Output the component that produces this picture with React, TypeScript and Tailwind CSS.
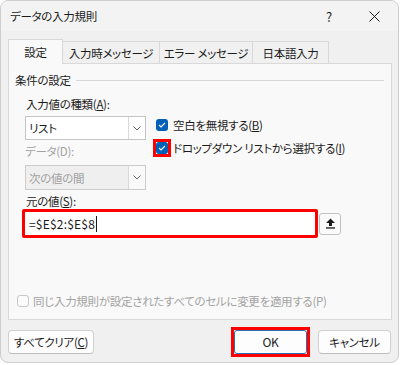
import React from "react";

function Check({ size = 12 }: { size?: number }) {
  return (
    <div
      className="rounded-[3px] bg-[#005fb8] flex items-center justify-center"
      style={{ width: size, height: size }}
    >
      <svg width="8" height="6" viewBox="0 0 8 6">
        <polyline points="1,3 3,5 7,1" fill="none" stroke="#ffffff" strokeWidth="1.1" />
      </svg>
    </div>
  );
}

function Chevron({ color = "#5c5c5c" }: { color?: string }) {
  return (
    <svg width="8" height="5" viewBox="0 0 8 5">
      <polyline points="0.5,0.5 4,4 7.5,0.5" fill="none" stroke={color} strokeWidth="1" />
    </svg>
  );
}

export default function App() {
  return (
    <div className="w-[400px] h-[365px] bg-white [font-family:'Noto_Sans_CJK_JP','Noto_Sans',sans-serif] [font-feature-settings:'palt'] text-[11.5px] tracking-[-0.3px] leading-[16px] text-[#1b1b1b]">
      <div className="w-[399px] h-[363px] rounded-[8px] border border-[#cdcdcd] bg-[#f0f0f0] overflow-hidden flex flex-col">
        {/* title bar */}
        <div className="h-[30px] bg-[#f3f3f3] flex items-center shrink-0">
          <span className="pl-[9px]">データの入力規則</span>
          <div className="ml-auto w-[46px] h-[30px] flex items-center justify-center text-[13px] pt-[1px]">?</div>
          <div className="w-[46px] h-[30px] flex items-center justify-center pr-[1px]">
            <svg width="11" height="11" viewBox="0 0 11 11">
              <path d="M0.5 0.5 L10.5 10.5 M10.5 0.5 L0.5 10.5" stroke="#1b1b1b" strokeWidth="1" />
            </svg>
          </div>
        </div>

        {/* tabs */}
        <div className="flex items-end h-[24px] mt-[8px] ml-[7px] relative z-10">
          <div className="w-[55px] h-[25px] bg-[#f9f9f9] border border-b-0 border-[#d9d9d9] flex items-center justify-center mb-[-1px]">
            設定
          </div>
          <div className="w-[98px] h-[22px] -ml-px border border-b-0 border-[#d9d9d9] flex items-center justify-center">
            入力時メッセージ
          </div>
          <div className="w-[94px] h-[22px] -ml-px border border-b-0 border-[#d9d9d9] flex items-center justify-center">
            エラー メッセージ
          </div>
          <div className="w-[77px] h-[22px] -ml-px border border-b-0 border-[#d9d9d9] flex items-center justify-center">
            日本語入力
          </div>
        </div>

        {/* panel */}
        <div className="ml-[7px] w-[384px] h-[257px] bg-[#f9f9f9] border border-[#d9d9d9] flex flex-col">
          <div className="flex items-center mt-[8px] pl-[6px] h-[16px]">
            <span>条件の設定</span>
            <div className="flex-1 h-px bg-[#d8d8d8] ml-[5px] mr-[7px]" />
          </div>
          <div className="mt-[8px] pl-[17px] h-[16px]">
            入力値の種類(<span className="underline">A</span>):
          </div>
          <div className="flex mt-[4px] pl-[16px]">
            <div className="w-[121px] flex flex-col">
              <div className="h-[24px] bg-white border border-[#c4c4c4] flex items-stretch">
                <span className="flex-1 pl-[3px] flex items-center">リスト</span>
                <div className="w-[17px] border-l border-[#d9d9d9] flex items-center justify-center">
                  <Chevron />
                </div>
              </div>
              <div className="mt-[3px] h-[16px] text-[#a3a3a3]">データ(D):</div>
              <div className="mt-[6px] h-[25px] bg-[#efefef] border border-[#cccccc] flex items-stretch">
                <span className="flex-1 pl-[3px] flex items-center text-[#9f9f9f]">次の値の間</span>
                <div className="w-[17px] bg-[#f9f9f9] border-l border-[#d9d9d9] flex items-center justify-center">
                  <Chevron color="#6a6a6a" />
                </div>
              </div>
            </div>
            <div className="ml-[7px] flex flex-col">
              <div className="flex items-center h-[18px]">
                <div className="w-[18px] h-[18px] flex items-center justify-center">
                  <Check />
                </div>
                <span className="ml-[2px]">
                  空白を無視する(<span className="underline">B</span>)
                </span>
              </div>
              <div className="flex items-center h-[18px] mt-[5px]">
                <div className="w-[18px] h-[18px] border-[3px] border-[#ff0000] flex items-center justify-center">
                  <Check />
                </div>
                <span className="ml-[2px]">
                  ドロップダウン リストから選択する(<span className="underline">I</span>)
                </span>
              </div>
            </div>
          </div>
          <div className="mt-[3px] pl-[17px] h-[16px]">
            元の値(<span className="underline">S</span>):
          </div>
          <div className="flex items-center mt-[0px] pl-[13px]">
            <div className="w-[296px] h-[29px] border-[3px] border-[#ff0000] rounded-[2px] bg-white flex items-center pl-[4px]">
              <span className="tracking-[0.2px] text-[12px]">=$E$2:$E$8</span>
              <div className="w-px h-[16px] bg-[#1b1b1b] ml-[1px]" />
            </div>
            <div className="ml-[1px] w-[22px] h-[22px] border border-[#c2c2c2] rounded-[3px] bg-[#fbfbfb] flex items-center justify-center">
              <svg width="11" height="11" viewBox="0 0 11 11">
                <path d="M5.5 0.5 L10 5 L7 5 L7 8 L4 8 L4 5 L1 5 Z" fill="#1b1b1b" />
                <rect x="1" y="9.3" width="9" height="1.3" fill="#1b1b1b" />
              </svg>
            </div>
          </div>
          <div className="mt-auto mb-[10px] flex items-center h-[16px] pl-[8px] text-[#a3a3a3]">
            <div className="w-[12px] h-[12px] border border-[#c8c8c8] rounded-[3px] bg-[#fbfbfb]" />
            <span className="ml-[4px]">同じ入力規則が設定されたすべてのセルに変更を適用する(P)</span>
          </div>
        </div>

        {/* footer */}
        <div className="flex items-center mt-[7px] ml-[7px] h-[30px]">
          <div className="w-[86px] h-[24px] bg-[#fdfdfd] border border-[#d0d0d0] border-b-[#bdbdbd] rounded-[4px] flex items-center justify-center">
            すべてクリア(<span className="underline">C</span>)
          </div>
          <div className="ml-[137px] w-[79px] h-[30px] border-[3px] border-[#ff0000] flex">
            <div className="flex-1 bg-[#fdfdfd] border border-[#2a6fb5] rounded-[3px] flex items-center justify-center text-[12px]">
              OK
            </div>
          </div>
          <div className="ml-[8px] w-[73px] h-[24px] bg-[#fdfdfd] border border-[#d0d0d0] border-b-[#bdbdbd] rounded-[4px] flex items-center justify-center">
            キャンセル
          </div>
        </div>
      </div>
    </div>
  );
}
